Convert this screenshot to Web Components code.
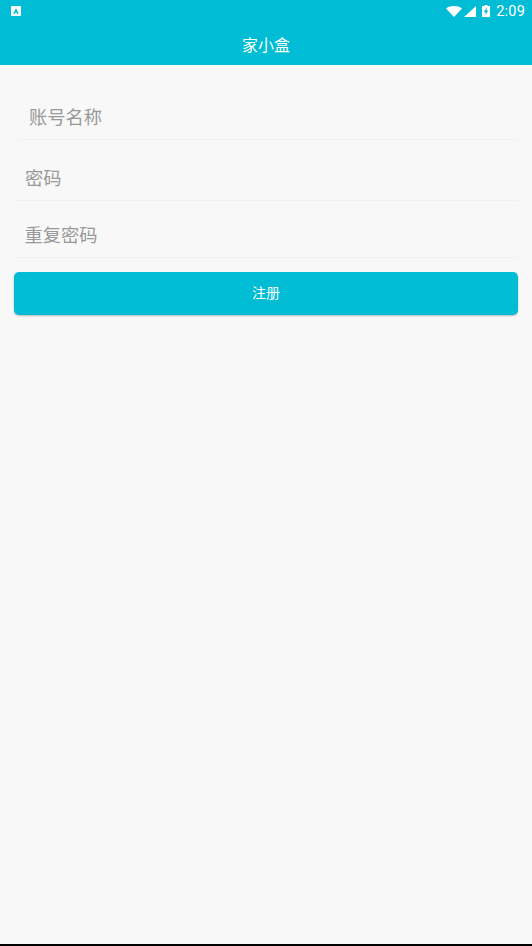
<!DOCTYPE html>
<html lang="zh">
<head>
<meta charset="utf-8">
<title>家小盒</title>
<style>
    html, body { margin: 0; padding: 0; height: 100%; }
    body {
        background: #f8f8f8;
        font-family: Roboto, "Noto Sans CJK SC", sans-serif;
    }
    #page { display: flex; flex-direction: column; height: 946px; overflow: hidden; }
</style>
</head>
<body>
<div id="page">
    <app-header title="家小盒" time="2:09"></app-header>
    <register-form>
        <form-field label="账号名称" inset="18" pad="11" height="75"></form-field>
        <form-field label="密码" inset="14" pad="11" height="61"></form-field>
        <form-field label="重复密码" inset="14" pad="10.5" height="57"></form-field>
        <form-button>注册</form-button>
    </register-form>
    <nav-edge></nav-edge>
</div>
<script>
/** Status bar plus title bar */
class AppHeader extends HTMLElement {
    constructor() {
        super();
        this.attachShadow({ mode: "open" });
    }

    connectedCallback() {
        const title = this.getAttribute("title") || "";
        const time = this.getAttribute("time") || "";
        this.shadowRoot.innerHTML = `
        <style>
            :host { display: block; background: #00bcd4; color: #fff; height: 65px; flex: none; }
            .status { height: 22px; display: flex; align-items: center; padding: 0 7px 0 11px; }
            .note { width: 10px; height: 10px; display: block; }
            .spacer { flex: 1; }
            .icons { display: flex; align-items: center; }
            .icons svg { display: block; }
            .time { font: 14.5px Roboto, sans-serif; margin-left: 6px; letter-spacing: 0.2px; }
            .title {
                height: 43px; display: flex; align-items: center; justify-content: center;
                font: 16px "Noto Sans CJK SC", sans-serif;
            }
        </style>
        <div class="status">
            <svg class="note" viewBox="0 0 10 10">
                <rect width="10" height="10" rx="1" fill="#fff"/>
                <path d="M5 2 L7.8 8 H6.4 L5.9 6.8 H4.1 L3.6 8 H2.2 Z" fill="#00bcd4"/>
            </svg>
            <span class="spacer"></span>
            <span class="icons">
                <svg width="16" height="11" viewBox="0 0 16 11" style="margin-right:2px;margin-top:1px"><path d="M0 2.4 C4.5 -0.8 11.5 -0.8 16 2.4 L8 11 Z" fill="#fff"/></svg>
                <svg width="12" height="11" viewBox="0 0 12 11" style="margin-right:6px;margin-top:1px"><path d="M12 0 V11 H0 Z" fill="#fff"/></svg>
                <svg width="8" height="12" viewBox="0 0 8 12"><path fill="#fff" fill-rule="evenodd" d="M2.5 0 H5.5 V1 H8 V12 H0 V1 H2.5 Z M4.8 2.4 L1.8 7 H3.5 V10 L6.2 5.6 H4.6 Z"/></svg>
            </span>
            <span class="time">${time}</span>
        </div>
        <div class="title">${title}</div>`;
    }
}

/** Column that holds the fields and the button */
class RegisterForm extends HTMLElement {
    constructor() {
        super();
        this.attachShadow({ mode: "open" });
        this.shadowRoot.innerHTML = `
        <style>
            :host { display: flex; flex-direction: column; flex: 1; }
        </style>
        <slot></slot>`;
    }
}

/** One text row with a hairline under it */
class FormField extends HTMLElement {
    constructor() {
        super();
        this.attachShadow({ mode: "open" });
    }

    connectedCallback() {
        const inset = this.getAttribute("inset") || "14";
        const pad = this.getAttribute("pad") || "11";
        const height = this.getAttribute("height") || "60";
        this.shadowRoot.innerHTML = `
        <style>
            :host { display: block; flex: none; }
            .row {
                box-sizing: border-box;
                height: ${height}px;
                margin: 0 14px 0 ${inset}px;
                padding: 0 0 10px ${pad}px;
                border-bottom: 1px solid #f0f0f0;
                display: flex;
                align-items: flex-end;
                font: 18.3px/26px "Noto Sans CJK SC", sans-serif;
                color: #999;
            }
        </style>
        <div class="row">${this.getAttribute("label") || ""}</div>`;
    }
}

/** Filled submit button */
class FormButton extends HTMLElement {
    constructor() {
        super();
        this.attachShadow({ mode: "open" });
        this.shadowRoot.innerHTML = `
        <style>
            :host { display: block; flex: none; margin: 14px 14px 0; }
            .btn {
                box-sizing: border-box;
                height: 43px;
                padding-bottom: 4px;
                border-radius: 5px;
                background: #00bcd4;
                color: #fff;
                box-shadow: 0 1px 2px rgba(0, 0, 0, 0.25);
                display: flex;
                align-items: center;
                justify-content: center;
                font: 14px "Noto Sans CJK SC", sans-serif;
            }
        </style>
        <div class="btn"><slot></slot></div>`;
    }
}

/** Black strip at the very bottom of the screen */
class NavEdge extends HTMLElement {
    constructor() {
        super();
        this.attachShadow({ mode: "open" }).innerHTML = `
        <style>
            :host { display: block; flex: none; height: 2px; background: #000; }
        </style>`;
    }
}

customElements.define("app-header", AppHeader);
customElements.define("register-form", RegisterForm);
customElements.define("form-field", FormField);
customElements.define("form-button", FormButton);
customElements.define("nav-edge", NavEdge);
</script>
</body>
</html>
